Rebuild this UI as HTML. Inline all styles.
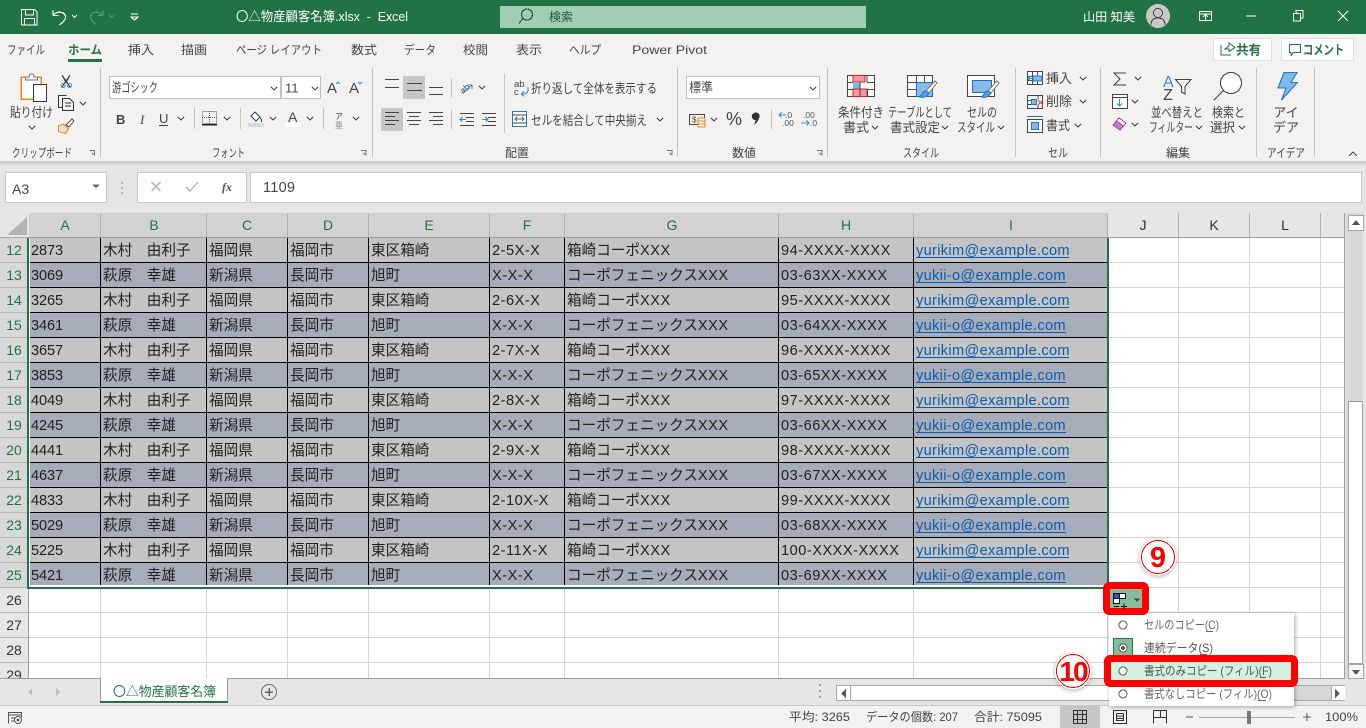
<!DOCTYPE html>
<html lang="ja"><head><meta charset="utf-8"><title>〇△物産顧客名簿.xlsx - Excel</title>
<style>
html,body{margin:0;padding:0;width:1366px;height:728px;overflow:hidden;background:#fff}
svg{display:block}
text{font-family:"Liberation Sans","Noto Sans CJK JP",sans-serif;fill:#444;font-size:12px;white-space:pre}
.c text,text.c{font-size:14.6px;fill:#222}
.n{letter-spacing:-.1px}
.p{letter-spacing:.5px}
.l{fill:#0b5cad;letter-spacing:.32px}
.h{font-size:14px;fill:#217346;text-anchor:middle}
.u{font-size:14px;fill:#333;text-anchor:middle}
.m{text-anchor:middle}
.b{font-size:13px}
.ln{fill:none;stroke:#444;stroke-width:1}
.cv{fill:none;stroke:#444;stroke-width:1}
</style></head><body>
<svg width="1366" height="728" viewBox="0 0 1366 728" xmlns="http://www.w3.org/2000/svg">
<defs>
<filter id="s" x="-20%" y="-20%" width="140%" height="140%"><feDropShadow dx="1" dy="1" stdDeviation="2" flood-color="#000" flood-opacity=".35"/></filter>
<filter id="g" x="-30%" y="-30%" width="160%" height="160%"><feDropShadow dx="0" dy="1" stdDeviation="2" flood-color="#000" flood-opacity=".3"/></filter>
<linearGradient id="sh" x1="0" y1="0" x2="0" y2="1"><stop offset="0" stop-color="#c4c4c4"/><stop offset="1" stop-color="#e6e6e6"/></linearGradient>
</defs>

<!-- backgrounds -->
<g shape-rendering="crispEdges">
<rect width="1366" height="34" fill="#217346"/>
<rect y="34" width="1366" height="127" fill="#f3f2f1"/>
<rect y="161" width="1366" height="5" fill="url(#sh)"/>
<rect y="166" width="1366" height="47" fill="#e6e6e6"/>
<rect x="500" y="6" width="366" height="22" fill="#a0cdb3"/>
<rect x="5.5" y="172.5" width="101" height="30" fill="#fff" stroke="#c8c8c8"/>
<rect x="137.5" y="172.5" width="109" height="30" fill="#fff" stroke="#c8c8c8"/>
<rect x="250.5" y="172.5" width="1111" height="30" fill="#fff" stroke="#c8c8c8"/>
<g fill="#c4c4c4">
<rect x="100" y="68" width="1" height="89"/><rect x="372" y="68" width="1" height="89"/><rect x="677" y="68" width="1" height="89"/><rect x="827" y="68" width="1" height="89"/><rect x="1015" y="68" width="1" height="89"/><rect x="1100" y="68" width="1" height="89"/><rect x="1256" y="68" width="1" height="89"/><rect x="1314" y="68" width="1" height="89"/>
<rect x="504" y="74" width="1" height="59"/><rect x="451" y="78" width="1" height="20"/><rect x="451" y="109" width="1" height="20"/>
<rect x="194" y="108" width="1" height="21"/><rect x="240" y="108" width="1" height="21"/><rect x="323" y="108" width="1" height="21"/><rect x="771" y="109" width="1" height="20"/>
</g>
<rect x="68" y="59" width="34" height="3" fill="#217346"/>
<rect x="1213.5" y="38.5" width="58" height="22" fill="#fff" stroke="#e1dfdd"/>
<rect x="1281.5" y="38.5" width="72" height="22" fill="#fff" stroke="#e1dfdd"/>
<rect x="109.5" y="76.5" width="171" height="22" fill="#fff" stroke="#c0c0c0"/>
<rect x="281.5" y="76.5" width="39" height="22" fill="#fff" stroke="#c0c0c0"/>
<rect x="686.5" y="76.5" width="133" height="22" fill="#fff" stroke="#c0c0c0"/>
<rect x="403" y="76" width="22" height="23" fill="#c6c6c6"/>
<rect x="381" y="108" width="22" height="23" fill="#c6c6c6"/>

<!-- sheet -->
<rect y="213" width="1345" height="25" fill="#e6e6e6"/>
<rect x="29" y="213" width="1079" height="24" fill="#d2d2d2"/>
<rect y="238" width="28" height="350" fill="#d8d8d8"/>
<rect y="588" width="28" height="91" fill="#e6e6e6"/>
<rect x="0" y="237" width="29" height="1" fill="#a8a8a8"/>
<rect x="29" y="237" width="1315" height="1" fill="#9c9c9c"/>
<rect x="28" y="588" width="1" height="91" fill="#9c9c9c"/>
<rect x="1344" y="213" width="1" height="466" fill="#9c9c9c"/>
<!-- header dividers -->
<g fill="#b0b0b0"><rect x="100" y="213" width="1" height="24"/><rect x="206" y="213" width="1" height="24"/><rect x="287" y="213" width="1" height="24"/><rect x="368" y="213" width="1" height="24"/><rect x="489" y="213" width="1" height="24"/><rect x="564" y="213" width="1" height="24"/><rect x="778" y="213" width="1" height="24"/><rect x="913" y="213" width="1" height="24"/><rect x="1107" y="213" width="1" height="24"/><rect x="1178" y="213" width="1" height="24"/><rect x="1249" y="213" width="1" height="24"/><rect x="1320" y="213" width="1" height="24"/></g>
<!-- row header lines -->
<g fill="#b8b8b8"><rect y="262" width="28" height="1"/><rect y="287" width="28" height="1"/><rect y="312" width="28" height="1"/><rect y="337" width="28" height="1"/><rect y="362" width="28" height="1"/><rect y="387" width="28" height="1"/><rect y="412" width="28" height="1"/><rect y="437" width="28" height="1"/><rect y="462" width="28" height="1"/><rect y="487" width="28" height="1"/><rect y="512" width="28" height="1"/><rect y="537" width="28" height="1"/><rect y="562" width="28" height="1"/><rect y="587" width="28" height="1"/><rect y="612" width="28" height="1"/><rect y="637" width="28" height="1"/><rect y="662" width="28" height="1"/></g>
<!-- gridlines empty -->
<g fill="#d4d4d4">
<rect x="1178" y="238" width="1" height="441"/><rect x="1249" y="238" width="1" height="441"/><rect x="1320" y="238" width="1" height="441"/>
<rect x="1108" y="262" width="236" height="1"/><rect x="1108" y="287" width="236" height="1"/><rect x="1108" y="312" width="236" height="1"/><rect x="1108" y="337" width="236" height="1"/><rect x="1108" y="362" width="236" height="1"/><rect x="1108" y="387" width="236" height="1"/><rect x="1108" y="412" width="236" height="1"/><rect x="1108" y="437" width="236" height="1"/><rect x="1108" y="462" width="236" height="1"/><rect x="1108" y="487" width="236" height="1"/><rect x="1108" y="512" width="236" height="1"/><rect x="1108" y="537" width="236" height="1"/><rect x="1108" y="562" width="236" height="1"/>
<rect x="29" y="587" width="1315" height="1"/><rect x="29" y="612" width="1315" height="1"/><rect x="29" y="637" width="1315" height="1"/><rect x="29" y="662" width="1315" height="1"/>
<rect x="100" y="588" width="1" height="91"/><rect x="206" y="588" width="1" height="91"/><rect x="287" y="588" width="1" height="91"/><rect x="368" y="588" width="1" height="91"/><rect x="489" y="588" width="1" height="91"/><rect x="564" y="588" width="1" height="91"/><rect x="778" y="588" width="1" height="91"/><rect x="913" y="588" width="1" height="91"/><rect x="1107" y="588" width="1" height="91"/>
</g>
<text x="14" y="680" class="u">29</text>
<g shape-rendering="crispEdges">
<!-- filled rows -->
<rect x="30" y="238" width="1077" height="25" fill="#c4c4c4"/>
<rect x="30" y="263" width="1077" height="25" fill="#a6acb9"/>
<rect x="30" y="288" width="1077" height="25" fill="#c4c4c4"/>
<rect x="30" y="313" width="1077" height="25" fill="#a6acb9"/>
<rect x="30" y="338" width="1077" height="25" fill="#c4c4c4"/>
<rect x="30" y="363" width="1077" height="25" fill="#a6acb9"/>
<rect x="30" y="388" width="1077" height="25" fill="#c4c4c4"/>
<rect x="30" y="413" width="1077" height="25" fill="#a6acb9"/>
<rect x="30" y="438" width="1077" height="25" fill="#c4c4c4"/>
<rect x="30" y="463" width="1077" height="25" fill="#a6acb9"/>
<rect x="30" y="488" width="1077" height="25" fill="#c4c4c4"/>
<rect x="30" y="513" width="1077" height="25" fill="#a6acb9"/>
<rect x="30" y="538" width="1077" height="25" fill="#c4c4c4"/>
<rect x="30" y="563" width="1077" height="23" fill="#a6acb9"/>
<rect x="29" y="238" width="1" height="348" fill="#fff"/><rect x="29" y="585" width="1078" height="2" fill="#fff"/>
<g fill="#000">
<rect x="100" y="238" width="1" height="347"/><rect x="206" y="238" width="1" height="347"/><rect x="287" y="238" width="1" height="347"/><rect x="368" y="238" width="1" height="347"/><rect x="489" y="238" width="1" height="347"/><rect x="564" y="238" width="1" height="347"/><rect x="778" y="238" width="1" height="347"/><rect x="913" y="238" width="1" height="347"/>
<rect x="30" y="262" width="1077" height="1"/><rect x="30" y="287" width="1077" height="1"/><rect x="30" y="312" width="1077" height="1"/><rect x="30" y="337" width="1077" height="1"/><rect x="30" y="362" width="1077" height="1"/><rect x="30" y="387" width="1077" height="1"/><rect x="30" y="412" width="1077" height="1"/><rect x="30" y="437" width="1077" height="1"/><rect x="30" y="462" width="1077" height="1"/><rect x="30" y="487" width="1077" height="1"/><rect x="30" y="512" width="1077" height="1"/><rect x="30" y="537" width="1077" height="1"/><rect x="30" y="562" width="1077" height="1"/>
</g>
<!-- selection border -->
<g fill="#217346"><rect x="27" y="238" width="2" height="351"/><rect x="1107" y="238" width="2" height="351"/><rect x="27" y="587" width="1082" height="2"/></g>
<!-- tab bar -->
<rect y="679" width="1345" height="26" fill="#e6e6e6"/>
<rect y="678" width="1345" height="1" fill="#9c9c9c"/>
<rect x="100" y="678" width="128" height="25" fill="#fff"/>
<rect x="100" y="678" width="1" height="25" fill="#9c9c9c"/><rect x="227" y="678" width="1" height="25" fill="#9c9c9c"/>
<rect x="100" y="701" width="128" height="2" fill="#217346"/>
<rect x="836.5" y="685.5" width="509" height="15" fill="#d8d8d8" stroke="#a8a8a8"/>
<rect x="851" y="686" width="300" height="14" fill="#fff"/>
<rect x="837" y="686" width="13" height="14" fill="#fff"/><rect x="850" y="686" width="1" height="14" fill="#a8a8a8"/>
<rect x="1331" y="686" width="14" height="14" fill="#fff"/><rect x="1331" y="686" width="1" height="14" fill="#a8a8a8"/>
<!-- status -->
<rect y="705" width="1366" height="1" fill="#c8c8c8"/>
<rect y="706" width="1366" height="22" fill="#f3f2f1"/>
<rect x="1060" y="706" width="40" height="22" fill="#c6c6c6"/>
<!-- vscroll -->
<rect x="1345" y="213" width="21" height="492" fill="#e6e6e6"/>
<rect x="1346" y="213" width="17" height="466" fill="#d8d8d8"/>
<rect x="1348.5" y="215.5" width="15" height="15" fill="#fff" stroke="#a8a8a8"/>
<rect x="1348.5" y="401.5" width="14" height="262" fill="#fff" stroke="#a0a0a0"/>
<rect x="1348.5" y="664.5" width="15" height="14" fill="#f6f6f6" stroke="#a8a8a8"/>
</g>
<path d="M1356 220l-4 5h8zM1356 675l-4-5h8zM846 689l-5 4.500 5 4.500zM1335 689l5 4.500-5 4.500z" fill="#555"/>
<path d="M7 235l20-18v18z" fill="#b4b4b4"/>

<!-- title bar -->
<g fill="none" stroke="#fff" stroke-width="1.2">
<path d="M21.500 9.500h13l2.500 2.500v13h-15.500zM25.500 9.500v5.500h8v-5.500M24.500 25v-6.500h10v6.500"/>
<path d="M53 10v5.500h5.500M53 15.500c3-4.500 11-4.500 12.500 0.500c.8 3.500-3 6.500-6 9"/>
<path d="M72 15l2.500 2.300 2.500-2.300M131 14h7M131 17l3.500 3 3.500-3z"/>
<path d="M1338 11l10 10M1348 11l-10 10M1246 16h10M1293.500 13.500h7v7.500h-7zM1296 13v-2.500h7v7.500h-2.500M1199.500 11.500h12v9h-12zM1199.500 14h12M1205.500 20v-5M1203 17l2.500-2.500 2.500 2.500"/>
</g>
<path d="M103 10v5.500h-5.500M103 15.500c-3-4.500-11-4.500-12.500 0.500c-.8 3.500 3 6.500 6 9M109 15l2.500 2.300 2.500-2.300" fill="none" stroke="#4f9a70" stroke-width="1.2"/>
<circle cx="527" cy="14.500" r="5.500" fill="none" stroke="#1d5b38" stroke-width="1.200"/><path d="M523 18.500l-4 5" stroke="#1d5b38" stroke-width="1.200"/>
<text x="236" y="21" textLength="172" lengthAdjust="spacingAndGlyphs" style="fill:#fff;font-size:13px">〇△物産顧客名簿.xlsx  -  Excel</text>
<text x="549" y="21" style="fill:#1d5b38">検索</text>
<text x="1083" y="21" style="fill:#fff" textLength="52" lengthAdjust="spacingAndGlyphs">山田 知美</text>
<circle cx="1158" cy="16" r="12" fill="#c8c8c8"/>
<path d="M1151 25c0-5 3-7 7-7s7 2 7 7" fill="none" stroke="#444"/><circle cx="1158" cy="13" r="4.500" fill="none" stroke="#444"/>

<!-- tabs -->
<g style="font-size:13px">
<text x="7" y="54" textLength="38" lengthAdjust="spacingAndGlyphs">ファイル</text>
<text x="68" y="54" textLength="34" lengthAdjust="spacingAndGlyphs" style="fill:#217346;font-weight:bold">ホーム</text>
<text x="128" y="54" textLength="26" lengthAdjust="spacingAndGlyphs">挿入</text>
<text x="181" y="54" textLength="26" lengthAdjust="spacingAndGlyphs">描画</text>
<text x="236" y="54" textLength="86" lengthAdjust="spacingAndGlyphs">ページ レイアウト</text>
<text x="351" y="54" textLength="26" lengthAdjust="spacingAndGlyphs">数式</text>
<text x="404" y="54" textLength="32" lengthAdjust="spacingAndGlyphs">データ</text>
<text x="463" y="54" textLength="25" lengthAdjust="spacingAndGlyphs">校閲</text>
<text x="516" y="54" textLength="26" lengthAdjust="spacingAndGlyphs">表示</text>
<text x="569" y="54" textLength="32" lengthAdjust="spacingAndGlyphs">ヘルプ</text>
<text x="632" y="54" textLength="75" lengthAdjust="spacingAndGlyphs">Power Pivot</text>
</g>
<text x="1236" y="54.500" textLength="25" lengthAdjust="spacingAndGlyphs" style="fill:#217346;font-weight:bold;font-size:13px">共有</text>
<text x="1303" y="54.500" textLength="41" lengthAdjust="spacingAndGlyphs" style="fill:#217346;font-weight:bold;font-size:13px">コメント</text>
<path d="M1221 45v10h10M1225 49l4-3v-3l6 4.500-6 4v-2.500h-4z" fill="none" stroke="#217346"/>
<path d="M1289.500 44.500h11v8h-7l-2.500 3v-3h-1.500z" fill="none" stroke="#217346"/>

<!-- clipboard -->
<rect x="21" y="77" width="20" height="22" fill="#fff" stroke="#e38a1e" stroke-width="1.500"/>
<path d="M25.500 80v-3h3.500c0-4 5-4 5 0h3.500v3z" fill="#f3f2f1" stroke="#777"/>
<rect x="33.500" y="84.500" width="13" height="17" fill="#fff" stroke="#333"/>
<text x="10" y="117" textLength="43" lengthAdjust="spacingAndGlyphs" class="b">貼り付け</text>
<path d="M62 75l4 8 4-8M70 75l-8 12M62 75l8 12" fill="none" stroke="#444" stroke-width="1"/><circle cx="63" cy="85.500" r="2" fill="none" stroke="#2a8dd4"/><circle cx="69.500" cy="85.500" r="2" fill="none" stroke="#2a8dd4"/>
<path d="M63 107.500h-4.500v-12h8M62.500 98.500h7l4 4v8h-11zM65 103h6M65 106h6" fill="none" stroke="#333"/>
<path d="M58.500 126l5-2 5 5-3 4.500-7-2z" fill="#fbe3c8" stroke="#e3801a"/><path d="M66 125l6-6 2 2-5 6z" fill="#fff" stroke="#555"/>
<g>
<text x="12" y="157" textLength="60" lengthAdjust="spacingAndGlyphs">クリップボード</text>
<text x="212" y="157" textLength="33" lengthAdjust="spacingAndGlyphs">フォント</text>
<text x="505" y="157" textLength="24" lengthAdjust="spacingAndGlyphs">配置</text>
<text x="732" y="157" textLength="24" lengthAdjust="spacingAndGlyphs">数値</text>
<text x="903" y="157" textLength="36" lengthAdjust="spacingAndGlyphs">スタイル</text>
<text x="1048" y="157" textLength="20" lengthAdjust="spacingAndGlyphs">セル</text>
<text x="1166" y="157" textLength="24" lengthAdjust="spacingAndGlyphs">編集</text>
<text x="1267" y="157" textLength="38" lengthAdjust="spacingAndGlyphs">アイデア</text>
</g>
<path d="M89.500 150.500h5v5M92 153l2 2M667 150.500h5v5M669.500 153l2 2M361 150.500h5v5M363.500 153l2 2M817 150.500h5v5M819.500 153l2 2" fill="none" stroke="#777"/>
<path d="M1349 156l4-4 4 4" fill="none" stroke="#444" stroke-width="1.200"/>

<!-- chevrons -->
<path class="cv" d="M29 126l3 3 3-3M80 102l3 3 3-3M271 87l3 3 3-3M312 87l3 3 3-3M178 117l3 3 3-3M224 117l3 3 3-3M270 117l3 3 3-3M307 117l3 3 3-3M353 117l3 3 3-3M479 86l3 3 3-3M657 118l3 3 3-3M810 87l3 3 3-3M711 118l3 3 3-3M872 126l3 3 3-3M942 126l3 3 3-3M998 126l3 3 3-3M1080 77l3 3 3-3M1080 100l3 3 3-3M1075 124l3 3 3-3M1135 77l3 3 3-3M1132 100l3 3 3-3M1132 123l3 3 3-3M1196 126l3 3 3-3M1239 126l3 3 3-3"/>

<!-- font -->
<text x="112" y="92" textLength="46" lengthAdjust="spacingAndGlyphs" class="b">游ゴシック</text>
<text x="285" y="92.500" style="font-size:13px">11</text>
<text x="327" y="93" style="font-size:15px">A</text><text x="349" y="93" style="font-size:15px">A</text>
<path d="M336 84l2-2 2 2" fill="none" stroke="#2a8dd4"/><path d="M358 82l2 2 2-2" fill="none" stroke="#2a8dd4"/>
<text x="116" y="124" style="font-size:13px;font-weight:bold">B</text>
<text x="140" y="124" style="font-size:13px;font-style:italic;font-family:'Liberation Serif',serif">I</text>
<text x="159" y="123" style="font-size:13px">U</text><path d="M159 125.500h9" stroke="#444"/>
<g shape-rendering="crispEdges"><rect x="202.500" y="111.500" width="14" height="12" fill="none" stroke="#555" stroke-dasharray="1 1"/><path d="M209.500 111v13M202 117.500h15" stroke="#555" stroke-dasharray="1 1"/><rect x="202" y="124" width="15" height="1.500" fill="#222"/></g>
<path d="M251 116l4-4 5 5-4 4zM260 118c2 1 2 3 1 4" fill="#fff" stroke="#444"/><rect x="248" y="123" width="16" height="4" fill="#cfd9ea"/>
<text x="288" y="122" style="font-size:14px">A</text><rect x="285" y="123" width="16" height="4" fill="#fff"/>
<text x="335" y="119" style="font-size:8px">ア</text><text x="335" y="128" style="font-size:8px;fill:#888">亜</text>

<!-- alignment -->
<path class="ln" d="M385 79.500h14M385 87.500h14M407 83.500h15M407 90.500h15M429 87.500h14M429 94.500h14"/>
<path class="ln" d="M385 112.500h14M385 116.500h10M385 120.500h14M385 124.500h10M407 112.500h14M409 116.500h10M407 120.500h14M409 124.500h10M429 112.500h14M433 116.500h10M429 120.500h14M433 124.500h10"/>
<text x="459" y="92" style="font-size:9px" transform="rotate(-40 464 88)">ab</text><path d="M463 93l9-8m-4 0h4v4" fill="none" stroke="#2a8dd4"/>
<path d="M460 113.500h14M466 117.500h8M466 121.500h8M460 125.500h14M482 113.500h14M488 117.500h8M488 121.500h8M482 125.500h14" class="ln"/>
<path d="M466 119.500h-6m2.500-2.500l-2.500 2.500 2.500 2.500M482 119.500h6m-2.500-2.500l2.500 2.500-2.500 2.500" fill="none" stroke="#2a8dd4"/>
<text x="514" y="87" style="font-size:9.500px">ab</text><text x="514" y="95" style="font-size:9px">c</text><path d="M528 87v3c0 3-2 4-6 4m2-2.500l-2.500 2.500 2.500 2.500" fill="none" stroke="#2a8dd4"/>
<text x="531" y="93" textLength="126" lengthAdjust="spacingAndGlyphs" class="b">折り返して全体を表示する</text>
<rect x="512.500" y="111.500" width="14" height="15" fill="#fff" stroke="#1e78c8"/><path d="M512.500 115h14M512.500 123h14" stroke="#444"/><path d="M515 119h9m-2-2l2 2-2 2m-7-2l2-2m-2 2l2 2" fill="none" stroke="#1e78c8"/>
<text x="531" y="125" textLength="116" lengthAdjust="spacingAndGlyphs" class="b">セルを結合して中央揃え</text>

<!-- number -->
<text x="689" y="92" textLength="24" lengthAdjust="spacingAndGlyphs" class="b">標準</text>
<rect x="689.500" y="114.500" width="15" height="10" fill="none" stroke="#444"/><text x="692" y="122.500" style="font-size:8px">$</text><rect x="698" y="118" width="7" height="9" rx="1" fill="#fff" stroke="#e3801a"/><path d="M698 121h7M698 124h7" stroke="#e3801a"/>
<text x="726" y="125" style="font-size:18px">%</text>
<path d="M753.500 113.500a3.500 3.500 0 1 1 5 5.500c-.5 2.500-2 4.500-4.500 5.500 1-2 1.500-3 1.500-4.500a3.500 3.500 0 0 1-2-6.500z" fill="#333"/>
<text x="785" y="118" style="font-size:8.500px;fill:#555">.0</text><text x="782" y="126" style="font-size:8.500px;fill:#555">.00</text><path d="M786 115h-7m2.500-2.500l-2.500 2.500 2.500 2.500" fill="none" stroke="#2a8dd4"/>
<text x="803" y="118" style="font-size:8.500px;fill:#555">.00</text><text x="810" y="126" style="font-size:8.500px;fill:#555">.0</text><path d="M801 123h8m-2.500-2.500l2.500 2.500-2.500 2.500" fill="none" stroke="#2a8dd4"/>

<!-- styles -->
<g shape-rendering="crispEdges">
<rect x="847.500" y="75.500" width="27" height="21" fill="#fff" stroke="#444"/>
<rect x="853" y="75.500" width="12" height="6.500" fill="#f89a9e" stroke="#d22"/>
<rect x="853" y="82" width="7" height="7" fill="#80b8e8"/>
<rect x="853" y="89" width="14" height="7.500" fill="#f89a9e" stroke="#d22"/>
<path d="M860 82v14M867 75v7M867.500 89v8M847 82.500h6M847 89.500h6M867 82.500h8M867 89.500h8" stroke="#444"/>
<rect x="907.500" y="75.500" width="25" height="21" fill="#fff" stroke="#444"/>
<path d="M916.500 75v22M924.500 75v22M907 82.500h26M907 89.500h26" stroke="#444"/>
<rect x="916.500" y="82.500" width="16" height="14" fill="#85bbea" stroke="#1e6fb8"/>
<rect x="967.500" y="75.500" width="27" height="21" fill="#fff" stroke="#444"/>
<rect x="972.500" y="80.500" width="19" height="12" fill="#85bbea" stroke="#1e6fb8"/>
</g>
<path d="M935 81l-9 10 3 2 8-10z" fill="#fff" stroke="#777"/><path d="M926 91c-2 0-3 1-4 3l-2 3c3 1 7 0 9-4z" fill="#5a9fdc" stroke="#1e78c8"/>
<path d="M997 81l-9 10 3 2 8-10z" fill="#fff" stroke="#777"/><path d="M988 91c-2 0-3 1-4 3l-2 3c3 1 7 0 9-4z" fill="#5a9fdc" stroke="#1e78c8"/>
<text x="838" y="117" textLength="46" lengthAdjust="spacingAndGlyphs" class="b">条件付き</text><text x="843" y="132" textLength="26" lengthAdjust="spacingAndGlyphs" class="b">書式</text>
<text x="888" y="117" textLength="64" lengthAdjust="spacingAndGlyphs" class="b">テーブルとして</text><text x="890" y="132" textLength="50" lengthAdjust="spacingAndGlyphs" class="b">書式設定</text>
<text x="967" y="117" textLength="30" lengthAdjust="spacingAndGlyphs" class="b">セルの</text><text x="957" y="132" textLength="38" lengthAdjust="spacingAndGlyphs" class="b">スタイル</text>

<!-- cells -->
<g shape-rendering="crispEdges" fill="none" stroke="#444">
<rect x="1027.500" y="71.500" width="15" height="13" fill="#fff"/><path d="M1027 76.500h16M1027 80.500h16M1032.500 71v14M1037.500 71v14"/><rect x="1033" y="76" width="9" height="5" fill="#80b8e8" stroke="#1e78c8"/>
<rect x="1027.500" y="95.500" width="15" height="13"/><path d="M1027 100.500h5M1027 104.500h5M1038 95v4M1038 105v4"/><rect x="1031.500" y="99.500" width="5" height="5" fill="#80b8e8" stroke="#1e78c8"/>
<rect x="1027.500" y="119.500" width="15" height="13" fill="#fff"/><rect x="1031.500" y="122.500" width="7" height="7" fill="#80b8e8" stroke="#1e78c8"/><path d="M1027 116.500h16" stroke="#1e78c8"/>
</g>
<path d="M1034 78.500h-6m2.500-2.500l-2.500 2.500 2.500 2.500" fill="none" stroke="#1e8fd8"/>
<path d="M1038 100l5 5M1043 100l-5 5" stroke="#e44" stroke-width="1.300"/>
<text x="1046" y="83" textLength="26" lengthAdjust="spacingAndGlyphs" class="b">挿入</text><text x="1046" y="106" textLength="26" lengthAdjust="spacingAndGlyphs" class="b">削除</text><text x="1046" y="130" textLength="24" lengthAdjust="spacingAndGlyphs" class="b">書式</text>

<!-- editing -->
<path d="M1126 73h-12l6 6-6 6h12" fill="none" stroke="#444" stroke-width="1.100"/>
<rect x="1112.500" y="94.500" width="15" height="14" fill="#fff" stroke="#444"/><path d="M1112 97.500h16" stroke="#444"/><path d="M1119.500 99v7m-2.500-2.500l2.500 2.500 2.500-2.500" fill="none" stroke="#1e8fd8"/>
<path d="M1113 125l6-7 7 5-6 7z" fill="#fff" stroke="#a33ea1"/><path d="M1113 125l3.500-4 7 5-3.500 4z" fill="#c77bc6" stroke="#a33ea1"/>
<text x="1163" y="87" style="font-size:16px;fill:#2a8dd4">A</text><text x="1163" y="100" style="font-size:16px">Z</text>
<path d="M1175.500 79.500h15.500l-6 7v7.500l-3.500-2v-5.500z" fill="none" stroke="#444" stroke-width="1.100"/>
<circle cx="1231" cy="83" r="10.500" fill="#fff" stroke="#444" stroke-width="1.100"/><path d="M1223.500 90.500l-10 10" stroke="#444" stroke-width="1.100"/>
<text x="1151" y="117" textLength="52" lengthAdjust="spacingAndGlyphs" class="b">並べ替えと</text><text x="1149" y="132" textLength="44" lengthAdjust="spacingAndGlyphs" class="b">フィルター</text>
<text x="1212" y="117" textLength="33" lengthAdjust="spacingAndGlyphs" class="b">検索と</text><text x="1210" y="132" textLength="25" lengthAdjust="spacingAndGlyphs" class="b">選択</text>

<!-- ideas -->
<path d="M1284 72.500h13l-6 10h6.500l-16 17.500 4.500-12h-8z" fill="#80b8e8" stroke="#1e78c8" stroke-width="1.100"/>
<text x="1286" y="117" class="m b">アイ</text><text x="1286" y="132" class="m b">デア</text>

<!-- formula bar -->
<text x="12" y="194" style="font-size:14px">A3</text>
<path d="M92.500 184.500h7l-3.500 4z" fill="#666"/>
<path d="M122 182v2M122 187v2M122 192v2" stroke="#aaa" stroke-width="1.500"/>
<path d="M151.500 182l9 9M160.500 182l-9 9M186 187l4 4 8-9" fill="none" stroke="#bcbcbc" stroke-width="1.600"/>
<text x="222" y="191" style="font-family:'Liberation Serif',serif;font-style:italic;font-weight:bold;font-size:12px;fill:#555">fx</text>
<text x="263" y="192" style="font-size:14.500px" textLength="32">1109</text>

<!-- headers -->
<text x="65" y="230" class="h">A</text><text x="154" y="230" class="h">B</text><text x="247" y="230" class="h">C</text><text x="328" y="230" class="h">D</text><text x="429" y="230" class="h">E</text><text x="527" y="230" class="h">F</text><text x="672" y="230" class="h">G</text><text x="846" y="230" class="h">H</text><text x="1011" y="230" class="h">I</text>
<text x="1143" y="230" class="u">J</text><text x="1214" y="230" class="u">K</text><text x="1285" y="230" class="u">L</text>
<text x="14" y="255" class="h">12</text><text x="14" y="280" class="h">13</text><text x="14" y="305" class="h">14</text><text x="14" y="330" class="h">15</text><text x="14" y="355" class="h">16</text><text x="14" y="380" class="h">17</text><text x="14" y="405" class="h">18</text><text x="14" y="430" class="h">19</text><text x="14" y="455" class="h">20</text><text x="14" y="480" class="h">21</text><text x="14" y="505" class="h">22</text><text x="14" y="530" class="h">23</text><text x="14" y="555" class="h">24</text><text x="14" y="580" class="h">25</text>
<text x="14" y="605" class="u">26</text><text x="14" y="630" class="u">27</text><text x="14" y="655" class="u">28</text>

<!-- cells -->
<g class="c">
<text y="255"><tspan x="31" class="n">2873</tspan><tspan x="103">木村　由利子</tspan><tspan x="209">福岡県</tspan><tspan x="290">福岡市</tspan><tspan x="371">東区箱崎</tspan><tspan x="492" class="p">2-5X-X</tspan><tspan x="567">箱崎コーポ</tspan><tspan class="p">XXX</tspan><tspan x="781" class="p">94-XXXX-XXXX</tspan><tspan x="916" class="l">yurikim@example.com</tspan></text>
<text y="280"><tspan x="31" class="n">3069</tspan><tspan x="103">萩原　幸雄</tspan><tspan x="209">新潟県</tspan><tspan x="290">長岡市</tspan><tspan x="371">旭町</tspan><tspan x="492" class="p">X-X-X</tspan><tspan x="567">コーポフェニックス</tspan><tspan class="p">XXX</tspan><tspan x="781" class="p">03-63XX-XXXX</tspan><tspan x="916" class="l">yukii-o@example.com</tspan></text>
<text y="305"><tspan x="31" class="n">3265</tspan><tspan x="103">木村　由利子</tspan><tspan x="209">福岡県</tspan><tspan x="290">福岡市</tspan><tspan x="371">東区箱崎</tspan><tspan x="492" class="p">2-6X-X</tspan><tspan x="567">箱崎コーポ</tspan><tspan class="p">XXX</tspan><tspan x="781" class="p">95-XXXX-XXXX</tspan><tspan x="916" class="l">yurikim@example.com</tspan></text>
<text y="330"><tspan x="31" class="n">3461</tspan><tspan x="103">萩原　幸雄</tspan><tspan x="209">新潟県</tspan><tspan x="290">長岡市</tspan><tspan x="371">旭町</tspan><tspan x="492" class="p">X-X-X</tspan><tspan x="567">コーポフェニックス</tspan><tspan class="p">XXX</tspan><tspan x="781" class="p">03-64XX-XXXX</tspan><tspan x="916" class="l">yukii-o@example.com</tspan></text>
<text y="355"><tspan x="31" class="n">3657</tspan><tspan x="103">木村　由利子</tspan><tspan x="209">福岡県</tspan><tspan x="290">福岡市</tspan><tspan x="371">東区箱崎</tspan><tspan x="492" class="p">2-7X-X</tspan><tspan x="567">箱崎コーポ</tspan><tspan class="p">XXX</tspan><tspan x="781" class="p">96-XXXX-XXXX</tspan><tspan x="916" class="l">yurikim@example.com</tspan></text>
<text y="380"><tspan x="31" class="n">3853</tspan><tspan x="103">萩原　幸雄</tspan><tspan x="209">新潟県</tspan><tspan x="290">長岡市</tspan><tspan x="371">旭町</tspan><tspan x="492" class="p">X-X-X</tspan><tspan x="567">コーポフェニックス</tspan><tspan class="p">XXX</tspan><tspan x="781" class="p">03-65XX-XXXX</tspan><tspan x="916" class="l">yukii-o@example.com</tspan></text>
<text y="405"><tspan x="31" class="n">4049</tspan><tspan x="103">木村　由利子</tspan><tspan x="209">福岡県</tspan><tspan x="290">福岡市</tspan><tspan x="371">東区箱崎</tspan><tspan x="492" class="p">2-8X-X</tspan><tspan x="567">箱崎コーポ</tspan><tspan class="p">XXX</tspan><tspan x="781" class="p">97-XXXX-XXXX</tspan><tspan x="916" class="l">yurikim@example.com</tspan></text>
<text y="430"><tspan x="31" class="n">4245</tspan><tspan x="103">萩原　幸雄</tspan><tspan x="209">新潟県</tspan><tspan x="290">長岡市</tspan><tspan x="371">旭町</tspan><tspan x="492" class="p">X-X-X</tspan><tspan x="567">コーポフェニックス</tspan><tspan class="p">XXX</tspan><tspan x="781" class="p">03-66XX-XXXX</tspan><tspan x="916" class="l">yukii-o@example.com</tspan></text>
<text y="455"><tspan x="31" class="n">4441</tspan><tspan x="103">木村　由利子</tspan><tspan x="209">福岡県</tspan><tspan x="290">福岡市</tspan><tspan x="371">東区箱崎</tspan><tspan x="492" class="p">2-9X-X</tspan><tspan x="567">箱崎コーポ</tspan><tspan class="p">XXX</tspan><tspan x="781" class="p">98-XXXX-XXXX</tspan><tspan x="916" class="l">yurikim@example.com</tspan></text>
<text y="480"><tspan x="31" class="n">4637</tspan><tspan x="103">萩原　幸雄</tspan><tspan x="209">新潟県</tspan><tspan x="290">長岡市</tspan><tspan x="371">旭町</tspan><tspan x="492" class="p">X-X-X</tspan><tspan x="567">コーポフェニックス</tspan><tspan class="p">XXX</tspan><tspan x="781" class="p">03-67XX-XXXX</tspan><tspan x="916" class="l">yukii-o@example.com</tspan></text>
<text y="505"><tspan x="31" class="n">4833</tspan><tspan x="103">木村　由利子</tspan><tspan x="209">福岡県</tspan><tspan x="290">福岡市</tspan><tspan x="371">東区箱崎</tspan><tspan x="492" class="p">2-10X-X</tspan><tspan x="567">箱崎コーポ</tspan><tspan class="p">XXX</tspan><tspan x="781" class="p">99-XXXX-XXXX</tspan><tspan x="916" class="l">yurikim@example.com</tspan></text>
<text y="530"><tspan x="31" class="n">5029</tspan><tspan x="103">萩原　幸雄</tspan><tspan x="209">新潟県</tspan><tspan x="290">長岡市</tspan><tspan x="371">旭町</tspan><tspan x="492" class="p">X-X-X</tspan><tspan x="567">コーポフェニックス</tspan><tspan class="p">XXX</tspan><tspan x="781" class="p">03-68XX-XXXX</tspan><tspan x="916" class="l">yukii-o@example.com</tspan></text>
<text y="555"><tspan x="31" class="n">5225</tspan><tspan x="103">木村　由利子</tspan><tspan x="209">福岡県</tspan><tspan x="290">福岡市</tspan><tspan x="371">東区箱崎</tspan><tspan x="492" class="p">2-11X-X</tspan><tspan x="567">箱崎コーポ</tspan><tspan class="p">XXX</tspan><tspan x="781" class="p">100-XXXX-XXXX</tspan><tspan x="916" class="l">yurikim@example.com</tspan></text>
<text y="580"><tspan x="31" class="n">5421</tspan><tspan x="103">萩原　幸雄</tspan><tspan x="209">新潟県</tspan><tspan x="290">長岡市</tspan><tspan x="371">旭町</tspan><tspan x="492" class="p">X-X-X</tspan><tspan x="567">コーポフェニックス</tspan><tspan class="p">XXX</tspan><tspan x="781" class="p">03-69XX-XXXX</tspan><tspan x="916" class="l">yukii-o@example.com</tspan></text>
</g>
<path d="M916 257.500h153M916 282.500h150M916 307.500h153M916 332.500h150M916 357.500h153M916 382.500h150M916 407.500h153M916 432.500h150M916 457.500h153M916 482.500h150M916 507.500h153M916 532.500h150M916 557.500h153M916 582.500h150" stroke="#0b5cad" stroke-width="1" shape-rendering="crispEdges"/>

<!-- tab bar content -->
<path d="M32 688l-4 4 4 4zM56 688l4 4-4 4z" fill="#c0c0c0"/>
<text x="113" y="696" textLength="103" lengthAdjust="spacingAndGlyphs" style="fill:#217346;font-size:13px">〇△物産顧客名簿</text>
<circle cx="269" cy="692" r="7.500" fill="none" stroke="#777" stroke-width="1.200"/><path d="M265 692h8M269 688v8" stroke="#666" stroke-width="1.500"/>
<path d="M820 684v2M820 690v2M820 696v2" stroke="#aaa" stroke-width="1.800"/>

<!-- status -->
<path d="M8.500 723.500v-11h13v5M8.500 715h13M11 718h4M11 721h3" fill="none" stroke="#555"/><circle cx="18" cy="720" r="3.500" fill="#f3f2f1" stroke="#555"/><circle cx="18" cy="720" r="1.300" fill="#555"/>
<text x="789" y="721" textLength="61" lengthAdjust="spacingAndGlyphs">平均: 3265</text>
<text x="866" y="721" textLength="92" lengthAdjust="spacingAndGlyphs">データの個数: 207</text>
<text x="974" y="721" textLength="68" lengthAdjust="spacingAndGlyphs">合計: 75095</text>
<g fill="none" stroke="#333" shape-rendering="crispEdges">
<path d="M1073.500 710.500h13v13h-13zM1077.500 710v14M1082.500 710v14M1073 714.500h14M1073 719.500h14"/>
<path d="M1113.500 710.500h13v13h-13zM1116.500 713.500h7v7h-7zM1116.500 716h7M1116.500 718.500h7"/>
<path d="M1153.500 710.500h13v13M1153.500 710.500v13M1153.500 717.500h13M1160.500 710v8"/>
</g>
<path d="M1186 717h7M1303 717h8M1307 713v8" stroke="#555"/>
<rect x="1199" y="717" width="96" height="1" fill="#aaa"/>
<rect x="1247" y="711" width="4" height="13" fill="#777"/>
<text x="1325" y="721" textLength="33" lengthAdjust="spacingAndGlyphs">100%</text>

<!-- popup -->
<rect x="1109" y="613" width="185" height="93" fill="#fff" filter="url(#s)"/>
<rect x="1113.500" y="638.500" width="19" height="19" fill="#86bc9c" stroke="#217346" shape-rendering="crispEdges"/>
<circle cx="1123" cy="625" r="4" fill="#fff" stroke="#555"/>
<circle cx="1123" cy="648" r="4" fill="#fff" stroke="#555"/><circle cx="1123" cy="648" r="2" fill="#555"/>
<text x="1144" y="629" textLength="75" lengthAdjust="spacingAndGlyphs" style="fill:#666">セルのコピー(C)</text><path d="M1206 631.500h7" stroke="#666"/>
<text x="1144" y="652" textLength="69" lengthAdjust="spacingAndGlyphs" style="fill:#555">連続データ(S)</text><path d="M1200 654.500h7" stroke="#666"/>
<rect x="1107.500" y="658.500" width="187" height="25" rx="3" fill="#d3f0e0" stroke="#f00" stroke-width="7"/>
<circle cx="1123" cy="671" r="4" fill="#fff" stroke="#555"/>
<text x="1144" y="675" textLength="128" lengthAdjust="spacingAndGlyphs" style="fill:#555">書式のみコピー (フィル)(F)</text><path d="M1260 677.500h6" stroke="#666"/>
<circle cx="1123" cy="694" r="4" fill="#fff" stroke="#555"/>
<text x="1144" y="698" textLength="128" lengthAdjust="spacingAndGlyphs" style="fill:#666">書式なしコピー (フィル)(O)</text><path d="M1258 700.500h8" stroke="#666"/>

<!-- paste button -->
<rect x="1106.500" y="585.500" width="39" height="26" rx="3" fill="#86bc9c" stroke="#f00" stroke-width="7"/>
<g shape-rendering="crispEdges"><rect x="1113.500" y="593.500" width="6" height="5" fill="#2a56c8" stroke="#111"/><rect x="1119.500" y="593.500" width="6" height="5" fill="#fff" stroke="#111"/><rect x="1113.500" y="598.500" width="6" height="5" fill="#fff" stroke="#111"/><path d="M1114 606.500h5M1121 606.500h6M1124 603.500v6" stroke="#111"/></g>
<path d="M1134 598.500h6l-3 3.500z" fill="#444"/>

<!-- circled numbers -->
<circle cx="1158" cy="557" r="18.500" fill="#fff" filter="url(#g)"/>
<circle cx="1158" cy="557" r="16.500" fill="#fff" stroke="#f00" stroke-width="1"/>
<text x="1158" y="567" text-anchor="middle" style="font-size:29px;font-weight:bold;fill:#f00">9</text>
<circle cx="1073" cy="671" r="18.500" fill="#fff" filter="url(#g)"/>
<circle cx="1073" cy="671" r="16.500" fill="#fff" stroke="#f00" stroke-width="1"/>
<text x="1073" y="681" text-anchor="middle" style="font-size:28px;font-weight:bold;fill:#f00;letter-spacing:-2px">10</text>
</svg>
</body></html>
